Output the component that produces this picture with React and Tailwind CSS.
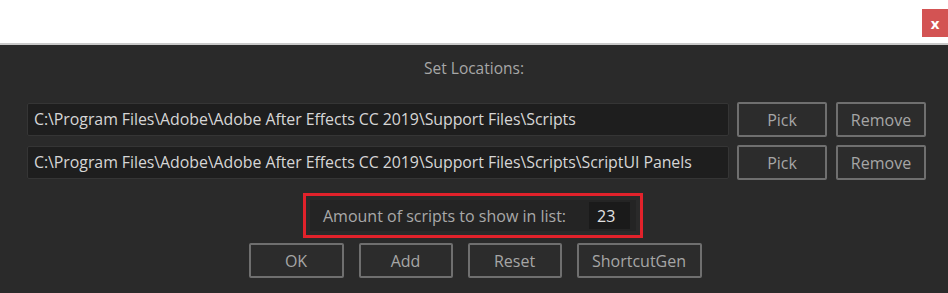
import React from "react";

const font = { fontFamily: '"Open Sans", "Noto Sans", sans-serif' };

function Btn({ label, className = "" }) {
  return (
    <button
      className={
        "h-[35px] border-2 border-[#6f6f6f] rounded-[2px] bg-[#2c2c2c] text-[16px] text-[#a6a6a6] " +
        className
      }
    >
      {label}
    </button>
  );
}

function PathRow({ path }) {
  return (
    <div className="flex items-center h-[35px]">
      <div className="w-[702px] h-[33px] ml-[27px] flex items-center px-[6px] bg-[#1e1e1e] border border-[#353535] rounded-[2px] text-[15.9px] tracking-[-0.05px] text-[#d6d6d6] whitespace-nowrap">
        {path}
      </div>
      <Btn label="Pick" className="w-[90px] ml-[8px]" />
      <Btn label="Remove" className="w-[90px] ml-[9px]" />
    </div>
  );
}

export default function App() {
  return (
    <div className="w-[948px] h-[293px] overflow-hidden bg-[#2a2a2a]" style={font}>
      <div className="h-[43px] bg-white flex justify-end items-start pt-[9px]">
        <div className="w-[26px] h-[28px] bg-[#d35353] text-white font-bold text-[15px] leading-none flex items-center justify-center">
          x
        </div>
      </div>
      <div className="h-[2px] bg-[#c9c9c9]" />
      <div className="pt-[13px] text-center text-[15.5px] text-[#a7a7a7] leading-[20px]">
        Set Locations:
      </div>
      <div className="mt-[24px] flex flex-col gap-[8px]">
        <PathRow path="C:\Program Files\Adobe\Adobe After Effects CC 2019\Support Files\Scripts" />
        <PathRow path="C:\Program Files\Adobe\Adobe After Effects CC 2019\Support Files\Scripts\ScriptUI Panels" />
      </div>
      <div className="mt-[13px] flex justify-center">
        <div className="ml-[-2px] w-[340px] h-[45px] border-[3px] border-[#e2222b] p-[4px]">
          <div className="h-full flex items-center bg-[#242424] pl-[13px] pr-[6px]">
            <span className="text-[16px] text-[#a9a9a9]">Amount of scripts to show in list:</span>
            <div className="ml-auto w-[41px] h-[27px] bg-[#1a1a1a] text-[16px] text-[#e2e2e2] flex items-center pl-[8px]">
              23
            </div>
          </div>
        </div>
      </div>
      <div className="mt-[5px] flex justify-center gap-[15px] pl-[2px]">
        <Btn label="OK" className="w-[95px]" />
        <Btn label="Add" className="w-[94px]" />
        <Btn label="Reset" className="w-[94px]" />
        <Btn label="ShortcutGen" className="w-[125px]" />
      </div>
    </div>
  );
}
